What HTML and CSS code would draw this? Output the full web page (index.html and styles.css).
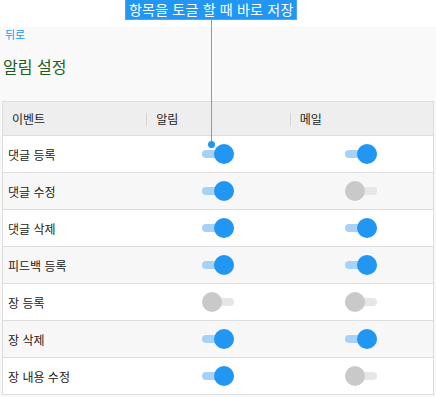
FILE: index.html
```html
<!DOCTYPE html>
<html lang="ko">
<head>
    <meta charset="UTF-8">
    <meta name="viewport" content="width=device-width, initial-scale=1.0">
    <title>알림 설정</title>
    <link rel="stylesheet" href="styles.css">
</head>
<body>
    <div class="hint">
        <span class="hint-label">항목을 토글 할 때 바로 저장</span>
        <span class="hint-line"></span>
        <span class="hint-dot"></span>
    </div>

    <div class="page">
        <a class="back" href="#">뒤로</a>
        <h1>알림 설정</h1>

        <table class="settings">
            <thead>
                <tr>
                    <th>이벤트</th>
                    <th class="sep">알림</th>
                    <th class="sep">메일</th>
                </tr>
            </thead>
            <tbody>
                <tr>
                    <td>댓글 등록</td>
                    <td><span class="toggle on"></span></td>
                    <td><span class="toggle on"></span></td>
                </tr>
                <tr>
                    <td>댓글 수정</td>
                    <td><span class="toggle on"></span></td>
                    <td><span class="toggle"></span></td>
                </tr>
                <tr>
                    <td>댓글 삭제</td>
                    <td><span class="toggle on"></span></td>
                    <td><span class="toggle on"></span></td>
                </tr>
                <tr>
                    <td>피드백 등록</td>
                    <td><span class="toggle on"></span></td>
                    <td><span class="toggle on"></span></td>
                </tr>
                <tr>
                    <td>장 등록</td>
                    <td><span class="toggle"></span></td>
                    <td><span class="toggle"></span></td>
                </tr>
                <tr>
                    <td>장 삭제</td>
                    <td><span class="toggle on"></span></td>
                    <td><span class="toggle on"></span></td>
                </tr>
                <tr>
                    <td>장 내용 수정</td>
                    <td><span class="toggle on"></span></td>
                    <td><span class="toggle"></span></td>
                </tr>
            </tbody>
        </table>
    </div>
</body>
</html>
```

FILE: styles.css
```css
body {
    margin: 0;
    padding: 27px 0 0;
    font-family: "Noto Sans CJK KR", "Noto Sans", sans-serif;
    color: #111;
    background: #fff;
}

.page {
    background: #f9f9f9;
    padding: 0 2px 2px;
    min-height: 370px;
}

.back {
    display: block;
    padding-left: 3px;
    font-size: 11px;
    line-height: 14px;
    color: #2196f3;
    text-decoration: none;
}

h1 {
    margin: 15px 0 25px;
    padding-left: 1px;
    font-size: 16px;
    line-height: 20px;
    font-weight: normal;
    color: #1b5e20;
}

/* table */

.settings {
    width: 432px;
    border-collapse: collapse;
    table-layout: fixed;
    border: 1px solid #ddd;
    font-size: 12px;
}

.settings th {
    position: relative;
    height: 33px;
    padding: 0 0 0 9px;
    background: #eee;
    border-bottom: 1px solid #ddd;
    text-align: left;
    font-weight: normal;
    color: #222;
}

.settings th.sep {
    padding-left: 10px;
}

.settings th.sep::before {
    content: "";
    position: absolute;
    left: 0;
    top: 11px;
    height: 13px;
    border-left: 1px solid #d6d6d6;
}

.settings td {
    height: 36px;
    padding: 0 0 0 5px;
    border-top: 1px solid #ddd;
    background: #fff;
    color: #222;
}

.settings td + td {
    padding: 0;
    text-align: center;
}

.settings tbody tr:nth-child(even) td {
    background: #f7f7f7;
}

/* toggle */

.toggle {
    position: relative;
    display: inline-block;
    vertical-align: middle;
    width: 32px;
    height: 20px;
}

.toggle::before {
    content: "";
    position: absolute;
    left: 0;
    right: 0;
    top: 6px;
    height: 8px;
    border-radius: 4px;
    background: #e6e6e6;
}

.toggle::after {
    content: "";
    position: absolute;
    left: 0;
    top: 0;
    width: 20px;
    height: 20px;
    border-radius: 50%;
    background: #c9c9c9;
}

.toggle.on::before {
    background: #a6d2f8;
}

.toggle.on::after {
    left: 12px;
    background: #2196f3;
}

/* annotation */

.hint {
    position: absolute;
    left: 125px;
    top: 0;
}

.hint-label {
    display: block;
    padding: 0 3px;
    height: 19px;
    line-height: 18px;
    font-size: 14px;
    letter-spacing: 0.2px;
    color: #fff;
    background: #2196f3;
    border: 1px solid #4aa8f5;
    border-top: 0;
    white-space: nowrap;
}

.hint-line {
    position: absolute;
    left: 86px;
    top: 19px;
    height: 124px;
    border-left: 1px solid #5aa9e6;
    z-index: 2;
}

.hint-dot {
    position: absolute;
    left: 83px;
    top: 141px;
    width: 7px;
    height: 7px;
    border-radius: 50%;
    background: #2196f3;
    z-index: 2;
}
```
